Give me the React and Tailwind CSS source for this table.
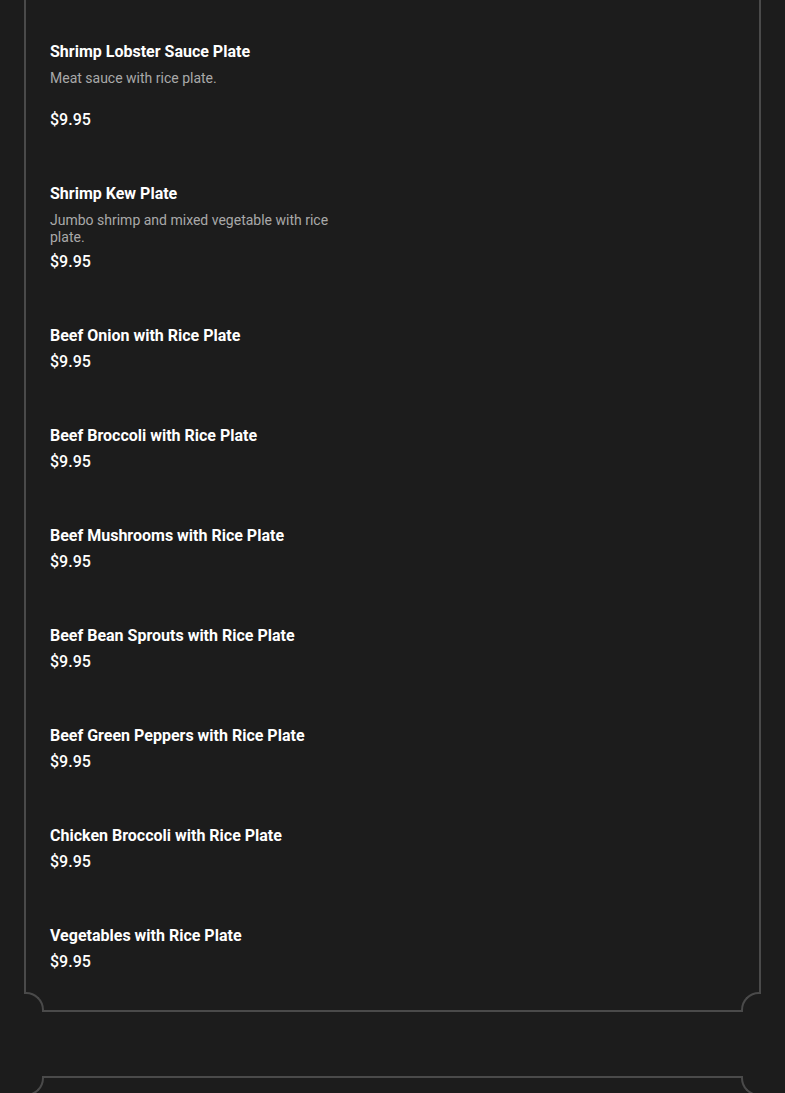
const items = [
  { name: "Shrimp Lobster Sauce Plate", desc: "Meat sauce with rice plate.", price: "$9.95" },
  { name: "Shrimp Kew Plate", desc: "Jumbo shrimp and mixed vegetable with rice plate.", price: "$9.95" },
  { name: "Beef Onion with Rice Plate", price: "$9.95" },
  { name: "Beef Broccoli with Rice Plate", price: "$9.95" },
  { name: "Beef Mushrooms with Rice Plate", price: "$9.95" },
  { name: "Beef Bean Sprouts with Rice Plate", price: "$9.95" },
  { name: "Beef Green Peppers with Rice Plate", price: "$9.95" },
  { name: "Chicken Broccoli with Rice Plate", price: "$9.95" },
  { name: "Vegetables with Rice Plate", price: "$9.95" },
];

function MenuItem({ item }) {
  return (
    <div className="flex flex-col">
      <h3 className="text-[16px] leading-6 font-bold text-white mb-[2px]">
        {item.name}
      </h3>
      {item.desc && (
        <p className="text-[14px] leading-[17px] text-[#a9a9a9] mt-[4px] mb-[4px] min-h-[34px] max-w-[285px]">
          {item.desc}
        </p>
      )}
      <span className="text-[16px] leading-6 font-medium text-white">{item.price}</span>
    </div>
  );
}

export default function App() {
  return (
    <div
      className="min-h-screen bg-[#1c1c1c] px-6 overflow-hidden"
      style={{ fontFamily: "Roboto, 'Liberation Sans', sans-serif" }}
    >
      <div className="relative border-x-2 border-b-2 border-[#4a4a4a] pt-[40px] pb-[36px] pl-[24px]">
        <div className="flex flex-col gap-[50px]">
          {items.map((item) => (
            <MenuItem key={item.name} item={item} />
          ))}
        </div>
        <div className="absolute -left-[2px] -bottom-[2px] w-[20px] h-[20px] bg-[#1c1c1c] border-t-2 border-r-2 border-[#4a4a4a] rounded-tr-[18px]" />
        <div className="absolute -right-[2px] -bottom-[2px] w-[20px] h-[20px] bg-[#1c1c1c] border-t-2 border-l-2 border-[#4a4a4a] rounded-tl-[18px]" />
      </div>

      <div className="relative mt-[64px] h-[60px] border-x-2 border-t-2 border-[#4a4a4a]">
        <div className="absolute -left-[2px] -top-[2px] w-[20px] h-[20px] bg-[#1c1c1c] border-b-2 border-r-2 border-[#4a4a4a] rounded-br-[18px]" />
        <div className="absolute -right-[2px] -top-[2px] w-[20px] h-[20px] bg-[#1c1c1c] border-b-2 border-l-2 border-[#4a4a4a] rounded-bl-[18px]" />
      </div>
    </div>
  );
}
